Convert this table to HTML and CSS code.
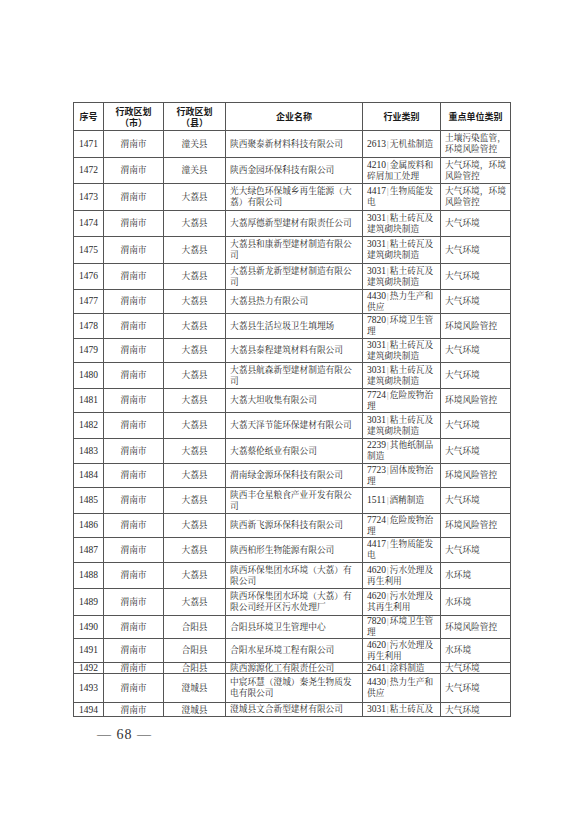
FILE: index.html
```html
<!DOCTYPE html>
<html lang="zh-CN">
<head>
<meta charset="utf-8">
<title>重点单位名录</title>
<link rel="stylesheet" href="styles.css">
</head>
<body>
<div class="page">
<table class="list">
<colgroup>
<col class="c-no"><col class="c-city"><col class="c-county"><col class="c-name"><col class="c-ind"><col class="c-type">
</colgroup>
<thead>
<tr class="head"><th>序号</th><th>行政区划<br>（市）</th><th>行政区划<br>（县）</th><th>企业名称</th><th>行业类别</th><th>重点单位类别</th></tr>
</thead>
<tbody>
<tr class="r27"><td class="ctr num">1471</td><td class="ctr">渭南市</td><td class="ctr">潼关县</td><td>陕西聚泰新材料科技有限公司</td><td><span class="num">2613</span><span class="bar">|</span>无机盐制造</td><td>土壤污染监管，环境风险管控</td></tr>
<tr class="r26"><td class="ctr num">1472</td><td class="ctr">渭南市</td><td class="ctr">潼关县</td><td>陕西金园环保科技有限公司</td><td><span class="num">4210</span><span class="bar">|</span>金属废料和碎屑加工处理</td><td>大气环境，环境风险管控</td></tr>
<tr class="r27"><td class="ctr num">1473</td><td class="ctr">渭南市</td><td class="ctr">大荔县</td><td>光大绿色环保城乡再生能源（大荔）有限公司</td><td><span class="num">4417</span><span class="bar">|</span>生物质能发电</td><td>大气环境，环境风险管控</td></tr>
<tr class="r26"><td class="ctr num">1474</td><td class="ctr">渭南市</td><td class="ctr">大荔县</td><td>大荔厚德新型建材有限责任公司</td><td><span class="num">3031</span><span class="bar">|</span>粘土砖瓦及建筑砌块制造</td><td>大气环境</td></tr>
<tr class="r27"><td class="ctr num">1475</td><td class="ctr">渭南市</td><td class="ctr">大荔县</td><td>大荔县和康新型建材制造有限公司</td><td><span class="num">3031</span><span class="bar">|</span>粘土砖瓦及建筑砌块制造</td><td>大气环境</td></tr>
<tr class="r26"><td class="ctr num">1476</td><td class="ctr">渭南市</td><td class="ctr">大荔县</td><td>大荔县新龙新型建材制造有限公司</td><td><span class="num">3031</span><span class="bar">|</span>粘土砖瓦及建筑砌块制造</td><td>大气环境</td></tr>
<tr class="r24"><td class="ctr num">1477</td><td class="ctr">渭南市</td><td class="ctr">大荔县</td><td>大荔县热力有限公司</td><td><span class="num">4430</span><span class="bar">|</span>热力生产和供应</td><td>大气环境</td></tr>
<tr class="r25"><td class="ctr num">1478</td><td class="ctr">渭南市</td><td class="ctr">大荔县</td><td>大荔县生活垃圾卫生填埋场</td><td><span class="num">7820</span><span class="bar">|</span>环境卫生管理</td><td>环境风险管控</td></tr>
<tr class="r24"><td class="ctr num">1479</td><td class="ctr">渭南市</td><td class="ctr">大荔县</td><td>大荔县泰程建筑材料有限公司</td><td><span class="num">3031</span><span class="bar">|</span>粘土砖瓦及建筑砌块制造</td><td>大气环境</td></tr>
<tr class="r26"><td class="ctr num">1480</td><td class="ctr">渭南市</td><td class="ctr">大荔县</td><td>大荔县航森新型建材制造有限公司</td><td><span class="num">3031</span><span class="bar">|</span>粘土砖瓦及建筑砌块制造</td><td>大气环境</td></tr>
<tr class="r24"><td class="ctr num">1481</td><td class="ctr">渭南市</td><td class="ctr">大荔县</td><td>大荔大坦收集有限公司</td><td><span class="num">7724</span><span class="bar">|</span>危险废物治理</td><td>环境风险管控</td></tr>
<tr class="r26"><td class="ctr num">1482</td><td class="ctr">渭南市</td><td class="ctr">大荔县</td><td>大荔天泽节能环保建材有限公司</td><td><span class="num">3031</span><span class="bar">|</span>粘土砖瓦及建筑砌块制造</td><td>大气环境</td></tr>
<tr class="r25"><td class="ctr num">1483</td><td class="ctr">渭南市</td><td class="ctr">大荔县</td><td>大荔蔡伦纸业有限公司</td><td><span class="num">2239</span><span class="bar">|</span>其他纸制品制造</td><td>大气环境</td></tr>
<tr class="r24"><td class="ctr num">1484</td><td class="ctr">渭南市</td><td class="ctr">大荔县</td><td>渭南绿金源环保科技有限公司</td><td><span class="num">7723</span><span class="bar">|</span>固体废物治理</td><td>环境风险管控</td></tr>
<tr class="r26"><td class="ctr num">1485</td><td class="ctr">渭南市</td><td class="ctr">大荔县</td><td>陕西丰仓星粮食产业开发有限公司</td><td><span class="num">1511</span><span class="bar">|</span>酒精制造</td><td>大气环境</td></tr>
<tr class="r24"><td class="ctr num">1486</td><td class="ctr">渭南市</td><td class="ctr">大荔县</td><td>陕西新飞源环保科技有限公司</td><td><span class="num">7724</span><span class="bar">|</span>危险废物治理</td><td>环境风险管控</td></tr>
<tr class="r25"><td class="ctr num">1487</td><td class="ctr">渭南市</td><td class="ctr">大荔县</td><td>陕西柏形生物能源有限公司</td><td><span class="num">4417</span><span class="bar">|</span>生物质能发电</td><td>大气环境</td></tr>
<tr class="r26"><td class="ctr num">1488</td><td class="ctr">渭南市</td><td class="ctr">大荔县</td><td>陕西环保集团水环境（大荔）有限公司</td><td><span class="num">4620</span><span class="bar">|</span>污水处理及再生利用</td><td>水环境</td></tr>
<tr class="r27"><td class="ctr num">1489</td><td class="ctr">渭南市</td><td class="ctr">大荔县</td><td>陕西环保集团水环境（大荔）有限公司经开区污水处理厂</td><td><span class="num">4620</span><span class="bar">|</span>污水处理及其再生利用</td><td>水环境</td></tr>
<tr class="r23"><td class="ctr num">1490</td><td class="ctr">渭南市</td><td class="ctr">合阳县</td><td>合阳县环境卫生管理中心</td><td><span class="num">7820</span><span class="bar">|</span>环境卫生管理</td><td>环境风险管控</td></tr>
<tr class="r24"><td class="ctr num">1491</td><td class="ctr">渭南市</td><td class="ctr">合阳县</td><td>合阳水星环境工程有限公司</td><td><span class="num">4620</span><span class="bar">|</span>污水处理及再生利用</td><td>水环境</td></tr>
<tr class="r11"><td class="ctr num">1492</td><td class="ctr">渭南市</td><td class="ctr">合阳县</td><td>陕西源源化工有限责任公司</td><td><span class="num">2641</span><span class="bar">|</span>涂料制造</td><td>大气环境</td></tr>
<tr class="r29"><td class="ctr num">1493</td><td class="ctr">渭南市</td><td class="ctr">澄城县</td><td>中宸环慧（澄城）秦尧生物质发电有限公司</td><td><span class="num">4430</span><span class="bar">|</span>热力生产和供应</td><td>大气环境</td></tr>
<tr class="r14 cut"><td class="ctr num">1494</td><td class="ctr">渭南市</td><td class="ctr">澄城县</td><td>澄城县文合新型建材有限公司</td><td><div class="clip"><span class="num">3031</span><span class="bar">|</span>粘土砖瓦及</div></td><td>大气环境</td></tr>
</tbody>
</table>
<p class="folio">— 68 —</p>
</div>
</body>
</html>
```
FILE: styles.css
```css
html, body {
  margin: 0;
  padding: 0;
  background: #ffffff;
}
.page {
  width: 578px;
  height: 818px;
  box-sizing: border-box;
  padding: 102px 0 0 73px;
  font-family: "Liberation Serif", "Noto Serif CJK SC", "Noto Sans CJK SC", serif;
  color: #2a2a2a;
}
.list {
  border-collapse: collapse;
  table-layout: fixed;
  width: 437px;
  font-size: 8.7px;
  line-height: 11px;
}
.c-no { width: 30px; }
.c-city { width: 60px; }
.c-county { width: 62px; }
.c-name { width: 137px; }
.c-ind { width: 78px; }
.c-type { width: 70px; }
.list th, .list td {
  border: 1px solid #555555;
  padding: 0 4px;
  vertical-align: middle;
  text-align: left;
  overflow: hidden;
}
.list td:last-child { padding: 0 2px 0 4px; }
.list th {
  font-family: "Noto Sans CJK SC", sans-serif;
  font-weight: 700;
  font-size: 9px;
  line-height: 11px;
  text-align: center;
  color: #1a1a1a;
}
.head { height: 28px; }
.list td.ctr { text-align: center; }
.num { font-family: "Liberation Serif", serif; font-size: 9.5px; }
.bar {
  display: inline-block;
  margin: 0 1px;
  color: #555;
  transform: scaleX(0.6);
}
.r11 { height: 11px; }
.r14 { height: 14px; }
.r23 { height: 23px; }
.r24 { height: 24px; }
.r25 { height: 25px; }
.r26 { height: 26px; }
.r27 { height: 27px; }
.r29 { height: 29px; }
.r11 td { line-height: 10px; }
.r14 td { line-height: 12px; }
.cut td { vertical-align: top; }
.cut td.ctr, .cut td:last-child { vertical-align: middle; }
.clip {
  height: 12px;
  overflow: hidden;
}
.folio {
  margin: 10px 0 0 24px;
  font-family: "Liberation Serif", serif;
  font-size: 14px;
  color: #333;
  letter-spacing: 1px;
}
```
